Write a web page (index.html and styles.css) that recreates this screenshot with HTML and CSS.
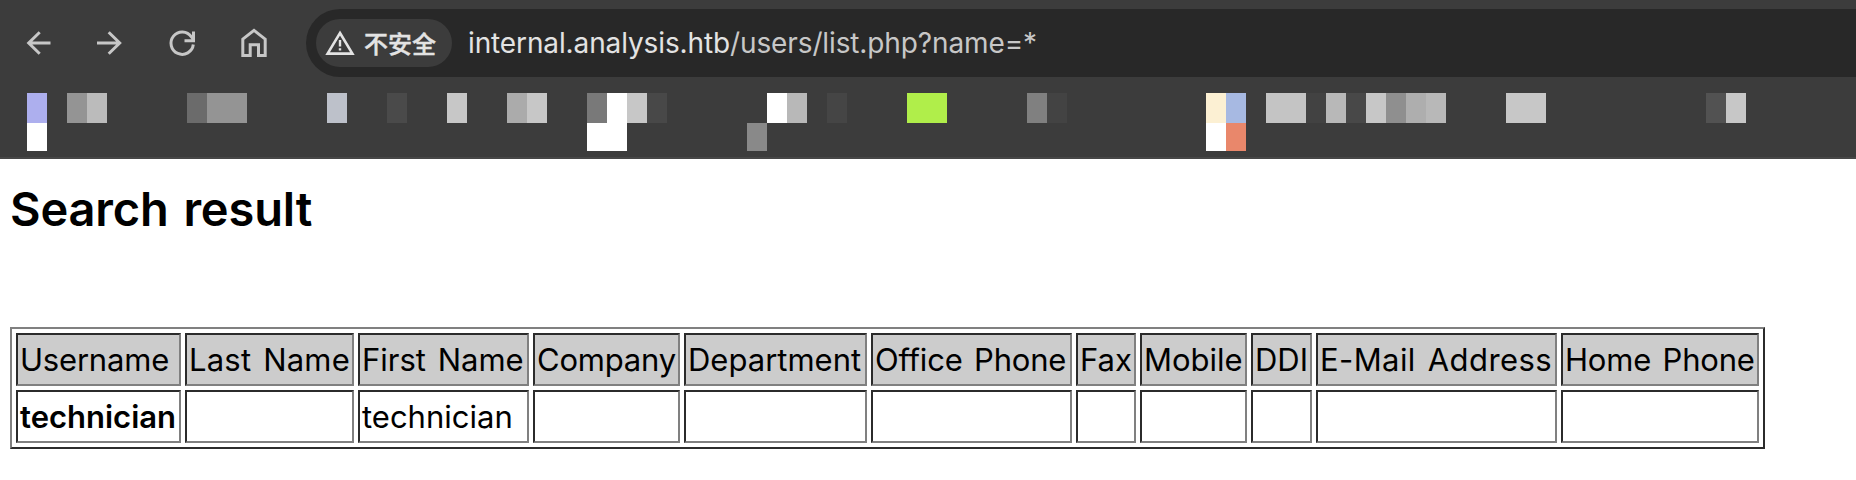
FILE: index.html
```
<!DOCTYPE html>
<html lang="zh-CN">
<head>
<meta charset="utf-8">
<title>Search result</title>
<link rel="stylesheet" href="styles.css">
</head>
<body>
<header class="browser">
  <nav class="toolbar">
    <svg class="icon" viewBox="0 0 36 36"><path d="M30.5 18H9M19.7 7.2L8.7 18l11 10.8"/></svg>
    <svg class="icon" viewBox="0 0 36 36"><path d="M5 18h22M16.7 7.2l11 10.8-11 10.8"/></svg>
    <svg class="icon" viewBox="0 0 36 36"><path d="M29.3 19.5A11.2 11.2 0 1 1 27.4 11.8l2 2.4M29.5 6.5v9.2H20.5"/></svg>
    <svg class="icon" viewBox="0 0 36 36"><path d="M6.8 14.2L18 5.3l11.2 8.9v16.3h-6.7V19.8h-8.3v10.7H6.8z"/></svg>
    <div class="omnibox">
      <div class="chip">
        <svg class="warn" viewBox="0 0 30 26"><path class="warn-outline" d="M15 3L27.4 23.6H2.6z"/><path class="warn-mark" d="M15 10v6.5M15 18.2v2.3"/></svg>
        <span>不安全</span>
      </div>
      <div class="url"><span class="host">internal.analysis.htb</span>/users/list.php?name=*</div>
    </div>
  </nav>
  <svg class="bookmarks" viewBox="0 0 1856 58" shape-rendering="crispEdges">
    <rect x="27" width="20" height="30" fill="#adafee"/><rect x="27" y="30" width="20" height="28" fill="#fff"/>
    <rect x="67" width="20" height="30" fill="#949494"/><rect x="87" width="20" height="30" fill="#bbb"/>
    <rect x="187" width="20" height="30" fill="#6b6b6b"/><rect x="207" width="40" height="30" fill="#949494"/>
    <rect x="327" width="20" height="30" fill="#bdc1ca"/><rect x="387" width="20" height="30" fill="#4a4a4a"/>
    <rect x="447" width="20" height="30" fill="#c7c7c7"/>
    <rect x="507" width="20" height="30" fill="#ababab"/><rect x="527" width="20" height="30" fill="#c7c7c7"/>
    <rect x="587" width="20" height="30" fill="#797979"/><rect x="607" width="20" height="30" fill="#fff"/>
    <rect x="627" width="20" height="30" fill="#c7c7c7"/><rect x="647" width="20" height="30" fill="#484848"/>
    <rect x="587" y="30" width="40" height="28" fill="#fff"/>
    <rect x="747" y="30" width="20" height="28" fill="#898989"/>
    <rect x="767" width="20" height="30" fill="#fff"/><rect x="787" width="20" height="30" fill="#b8b8b8"/>
    <rect x="827" width="20" height="30" fill="#454545"/>
    <rect x="906.5" width="40" height="30" fill="#b0ee4a"/>
    <rect x="1026.5" width="20" height="30" fill="#808080"/><rect x="1046.5" width="20" height="30" fill="#434343"/>
    <rect x="1206.4" width="20" height="30" fill="#fcf0d3"/><rect x="1226.4" width="20" height="30" fill="#a7b9e2"/>
    <rect x="1206.4" y="30" width="20" height="28" fill="#fff"/><rect x="1226.4" y="30" width="20" height="28" fill="#e9876b"/>
    <rect x="1266.4" width="40" height="30" fill="#c4c4c4"/><rect x="1306.4" width="20" height="30" fill="#424242"/>
    <rect x="1326.4" width="20" height="30" fill="#b8b8b8"/><rect x="1346.4" width="20" height="30" fill="#484848"/>
    <rect x="1366.4" width="20" height="30" fill="#c7c7c7"/><rect x="1386.4" width="20" height="30" fill="#8f8f8f"/>
    <rect x="1406.4" width="20" height="30" fill="#aeaeae"/><rect x="1426.4" width="20" height="30" fill="#b8b8b8"/>
    <rect x="1506.4" width="40" height="30" fill="#c7c7c7"/>
    <rect x="1706.4" width="20" height="30" fill="#525252"/><rect x="1726.4" width="20" height="30" fill="#c7c7c7"/>
  </svg>
</header>
<main class="page">
  <h1 class="title">Search result</h1>
  <table class="results">
    <colgroup>
      <col class="c-user"><col class="c-last"><col class="c-first"><col class="c-company"><col class="c-dept"><col class="c-office"><col class="c-fax"><col class="c-mobile"><col class="c-ddi"><col class="c-mail"><col class="c-home">
    </colgroup>
    <tr class="head">
      <td class="tight">Username</td><td class="loose">Last Name</td><td>First Name</td><td class="tight">Company</td><td>Department</td><td class="tight">Office Phone</td><td>Fax</td><td>Mobile</td><td>DDI</td><td class="wide">E-Mail Address</td><td class="tight">Home Phone</td>
    </tr>
    <tr>
      <td><b>technician</b></td><td></td><td>technician</td><td></td><td></td><td></td><td></td><td></td><td></td><td></td><td></td>
    </tr>
  </table>
</main>
</body>
</html>
```
FILE: styles.css
```
* { box-sizing: border-box; }

body {
  margin: 0;
  background: #fff;
  color: #000;
  font-family: Inter, "Liberation Sans", "Noto Sans CJK SC", sans-serif;
  overflow: hidden;
}

.browser {
  height: 159px;
  padding-top: 9px;
  background: #3c3c3c;
  border-bottom: 2px solid #474747;
}

.toolbar {
  display: flex;
  align-items: center;
  gap: 36px;
  height: 68px;
  padding-left: 20px;
}

.icon {
  flex: none;
  width: 36px;
  height: 36px;
  fill: none;
  stroke: #c7c7c7;
  stroke-width: 3;
}

.omnibox {
  display: flex;
  flex: 1;
  align-items: center;
  gap: 16px;
  height: 68px;
  margin-left: -2px;
  padding-left: 10px;
  border-radius: 34px 0 0 34px;
  background: #282828;
}

.chip {
  display: flex;
  align-items: center;
  gap: 9px;
  width: 136px;
  height: 48px;
  padding-left: 9px;
  border-radius: 24px;
  background: #3c3c3c;
  color: #e3e3e3;
  font: 500 24px/46px "Noto Sans CJK SC", sans-serif;
  -webkit-text-stroke: 0.4px #e3e3e3;
  white-space: nowrap;
}

.warn {
  flex: none;
  width: 30px;
  height: 26px;
  fill: none;
  stroke: #e3e3e3;
}

.warn-outline { stroke-width: 2.6; }
.warn-mark { stroke-width: 2.4; }

.url {
  color: #c7c7c7;
  font-size: 28px;
  line-height: 48px;
  letter-spacing: -0.12px;
  white-space: nowrap;
}

.host { color: #e3e3e3; }

.bookmarks {
  display: block;
  width: 1856px;
  height: 58px;
  margin-top: 16px;
}

.page { padding: 22px 10px 0; }

.title {
  height: 56px;
  margin: 0 0 90px;
  font-size: 47px;
  font-weight: 600;
  line-height: 56px;
  letter-spacing: -0.15px;
  word-spacing: 3px;
}

.results {
  table-layout: fixed;
  width: 1755px;
  border: 2px solid;
  border-color: #808080 #2b2b2b #2b2b2b #808080;
  border-collapse: separate;
  border-spacing: 4px;
  font-size: 31px;
  line-height: 38px;
  word-spacing: 3px;
}

.results td {
  height: 53px;
  padding: 2px;
  border: 2px solid;
  border-color: #2b2b2b #808080 #808080 #2b2b2b;
  white-space: nowrap;
}

.head td { background: #ccc; }
.results .loose { letter-spacing: 0.2px; }
.results .wide { letter-spacing: 0.4px; }
.results .tight { letter-spacing: -0.2px; }
.results b { font-weight: 600; }

.c-user { width: 165px; }
.c-last { width: 169px; }
.c-first { width: 171px; }
.c-company { width: 147px; }
.c-dept { width: 183px; }
.c-office { width: 201px; }
.c-fax { width: 60px; }
.c-mobile { width: 107px; }
.c-ddi { width: 61px; }
.c-mail { width: 241px; }
.c-home { width: 198px; }
```
